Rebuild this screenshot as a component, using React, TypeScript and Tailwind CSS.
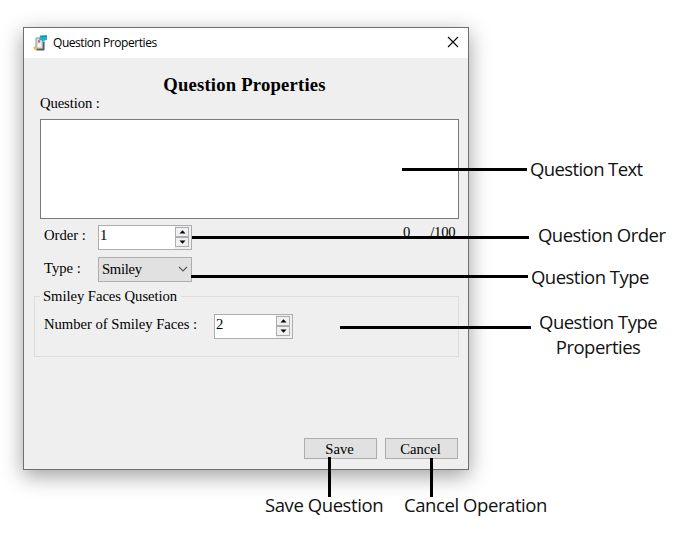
import type { ReactNode } from "react";

const serif = "font-['Liberation_Serif',serif]";
const sans = "font-['Open_Sans',sans-serif]";

function SurveyIcon() {
  return (
    <svg width="15" height="17" viewBox="0 0 15 17">
      <path d="M3 3h8v11.5H3z" fill="#d9dde2" stroke="#8b959c" strokeWidth="1" />
      <path d="M9.6 7h1.8v8H9.6zM3.2 13.4h8v2.2h-8z" fill="#56616a" />
      <path d="M5 5.2h1.8v2.2H5z" fill="#c9544d" />
      <path d="M5 8.5h3v3H5z" fill="#f6f7f8" />
      <path d="M7 0.6 14 0v5l-3 .4L9.3 7.5 9 5.5 6.3 5z" fill="#22b1c4" />
      <path d="M7.8 1.5h5.6" stroke="#128ea4" strokeWidth="1" />
      <path d="m2.5 10.4.8 1.6 1.8.2-1.3 1.3.3 1.8-1.6-.8-1.6.8.3-1.8L0 12.2l1.8-.2z" fill="#f0b93a" />
    </svg>
  );
}

function Spinner({ value, width }: { value: string; width: string }) {
  return (
    <div className={`flex h-[25px] justify-between border border-[#abadb3] bg-white ${width}`}>
      <span className="pl-px text-[14.67px] leading-[19px]">{value}</span>
      <div className="flex w-[16px] flex-col bg-[#f0f0f0] py-px">
        {["M2.5 6.5h6L5.5 3.2z", "M2.5 3.5h6L5.5 6.8z"].map((d) => (
          <span key={d} className="flex h-[10px] w-[14px] items-center justify-center border border-[#acacac] bg-[#f0f0f0]">
            <svg width="11" height="10" viewBox="0 0 11 10" className="shrink-0">
              <path d={d} fill="#000" />
            </svg>
          </span>
        ))}
      </div>
    </div>
  );
}

function DialogButton({ children }: { children: ReactNode }) {
  return (
    <button className="h-[21px] w-[73px] border border-[#adadad] bg-[#e1e1e1] pr-0.5 text-center text-[14.67px] leading-[21px]">
      {children}
    </button>
  );
}

function Callout({ place, children }: { place: string; children: ReactNode }) {
  return (
    <div className={`absolute whitespace-nowrap text-center text-[18.5px] font-normal leading-[25px] text-[#111] ${sans} ${place}`}>
      {children}
    </div>
  );
}

export default function App() {
  return (
    <div className="relative h-[544px] w-[680px] overflow-hidden bg-white pl-[23px] pt-[27px] text-black">
      <div className={`flex h-[443px] w-[446px] flex-col border border-[#6f6f6f] bg-[#efefef] shadow-[0_6px_20px_rgba(0,0,0,0.38)] ${serif}`}>
        <header className="flex h-[30px] shrink-0 items-center justify-between bg-white pl-[9px] pr-[9px]">
          <div className="flex items-center gap-[5px]">
            <SurveyIcon />
            <span className={`text-[12px] leading-4 tracking-[-0.45px] ${sans}`}>Question Properties</span>
          </div>
          <svg width="12" height="12" viewBox="0 0 12 12" className="-mt-0.5">
            <path d="M1 1l10 10M11 1 1 11" stroke="#000" strokeWidth="1.1" />
          </svg>
        </header>
        <main className="flex flex-1 flex-col">
          <h1 className="mt-4 h-[21px] pr-[3px] text-center text-[18.67px] font-bold leading-[21px] tracking-[0.2px]">Question Properties</h1>
          <div className="ml-4 h-[24px] text-[14.67px] leading-[17px] tracking-[-0.1px]">Question :</div>
          <div className="ml-4 h-[100px] w-[419px] border border-[#7a7a7a] bg-white" />
          <div className="mt-1.5 flex h-[25px] pl-5 text-[14.67px]">
            <span className="w-[54px] leading-[21px]">Order :</span>
            <Spinner value="1" width="w-[94px]" />
            <span className="ml-[211px] leading-[15px]">0</span>
            <span className="ml-5 leading-[15px] tracking-[-0.3px]">/100</span>
          </div>
          <div className="mt-[7px] flex h-[25px] pl-5 text-[14.67px]">
            <span className="w-[54px] leading-[23px]">Type :</span>
            <div className="flex w-[94px] items-center justify-between border border-[#adadad] bg-[#e1e1e1] pl-[3px] pr-[3px]">
              <span className="leading-[23px] tracking-[-0.3px]">Smiley</span>
              <svg width="10" height="7" viewBox="0 0 10 7">
                <path d="m1 1 4 4 4-4" fill="none" stroke="#555" strokeWidth="1.1" />
              </svg>
            </div>
          </div>
          <fieldset className="ml-[10px] mt-1.5 h-[69px] w-[425px] border border-[#dcdcdc] pl-[9px] text-[14.67px]">
            <legend className="-ml-[4px] h-[17px] w-[141px] whitespace-nowrap pl-[3px] leading-[17px] tracking-[-0.05px]">Smiley Faces Qusetion</legend>
            <div className="mt-[9px] flex">
              <span className="w-[170px] leading-[21px] tracking-[-0.03px]">Number of Smiley Faces :</span>
              <Spinner value="2" width="w-[79px]" />
            </div>
          </fieldset>
          <footer className="mb-[10px] mt-auto flex justify-end gap-2 pr-[10px]">
            <DialogButton>Save</DialogButton>
            <DialogButton>Cancel</DialogButton>
          </footer>
        </main>
      </div>
      <svg className="absolute left-0 top-0" width="680" height="544" viewBox="0 0 680 544">
        <path
          d="M402 169.5H527M192 237.5H529M191 276.5H528M340 327.5H531M329.5 457V497M431.5 458V497"
          fill="none"
          stroke="#000"
          strokeWidth="3"
        />
      </svg>
      <Callout place="left-[530px] top-[156px] tracking-[-0.6px]">Question Text</Callout>
      <Callout place="left-[538px] top-[222px] tracking-[-0.52px]">Question Order</Callout>
      <Callout place="left-[531px] top-[264px] tracking-[-0.52px]">Question Type</Callout>
      <Callout place="left-[539px] top-[309px] tracking-[-0.5px]">
        Question Type
        <br />
        Properties
      </Callout>
      <Callout place="left-[265px] top-[492px] tracking-[-0.42px]">Save Question</Callout>
      <Callout place="left-[404px] top-[492px] tracking-[-0.42px]">Cancel Operation</Callout>
    </div>
  );
}
